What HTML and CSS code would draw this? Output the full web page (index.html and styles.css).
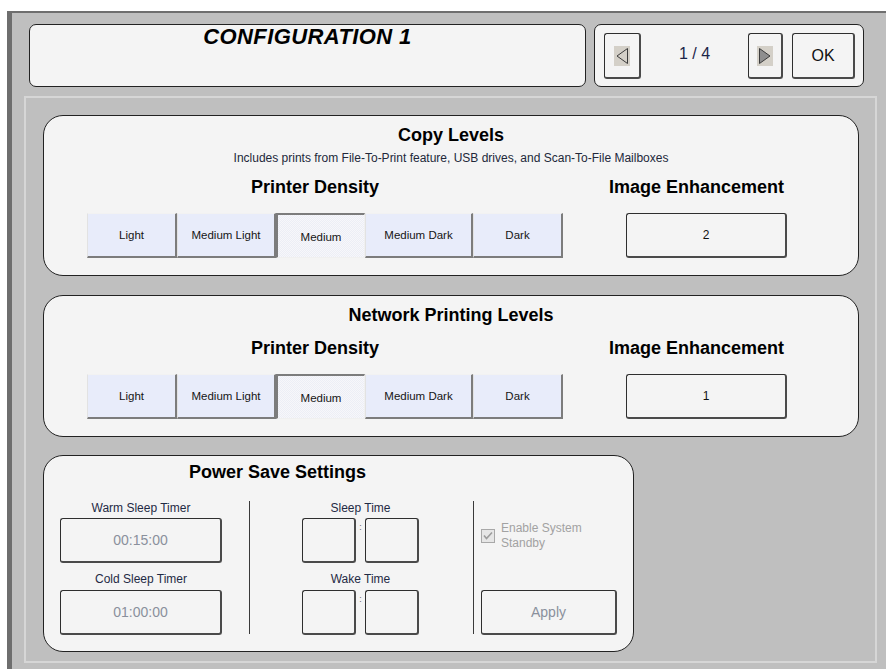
FILE: index.html
```html
<!DOCTYPE html>
<html>
<head>
<meta charset="utf-8">
<link rel="stylesheet" href="styles.css">
</head>
<body>
<div class="frame">
  <div class="header-row">
    <div class="title-box"><h1 class="page-title">CONFIGURATION 1</h1></div>
    <div class="nav-box">
      <button class="btn nav-btn prev">
        <svg width="16" height="20" viewBox="0 0 16 20"><rect x="0" y="0" width="16" height="20" fill="#d4d0c8"/><polygon points="13.5,2.5 3,10 13.5,17.5" fill="#d4d0c8" stroke="#3c3c3c" stroke-width="1"/></svg>
      </button>
      <div class="counter">1 / 4</div>
      <button class="btn nav-btn next">
        <svg width="16" height="20" viewBox="0 0 16 20"><rect x="0" y="0" width="16" height="20" fill="#d4d0c8"/><polygon points="2.5,2.5 13,10 2.5,17.5" fill="#8e8e8e" stroke="#3c3c3c" stroke-width="1"/></svg>
      </button>
      <button class="btn ok-btn">OK</button>
    </div>
  </div>

  <div class="content">
    <section class="panel levels-panel">
      <h2 class="panel-title">Copy Levels</h2>
      <p class="subtitle">Includes prints from File-To-Print feature, USB drives, and Scan-To-File Mailboxes</p>
      <div class="levels">
        <div class="density-col">
          <h3 class="col-title density-title">Printer Density</h3>
          <div class="density-row">
            <div class="dens w-light">Light</div>
            <div class="dens w-ml">Medium Light</div>
            <div class="dens w-med selected">Medium</div>
            <div class="dens w-md">Medium Dark</div>
            <div class="dens w-dark">Dark</div>
          </div>
        </div>
        <div class="enh-col">
          <h3 class="col-title">Image Enhancement</h3>
          <div class="btn enh-btn">2</div>
        </div>
      </div>
    </section>

    <section class="panel levels-panel network">
      <h2 class="panel-title">Network Printing Levels</h2>
      <div class="levels">
        <div class="density-col">
          <h3 class="col-title density-title">Printer Density</h3>
          <div class="density-row">
            <div class="dens w-light">Light</div>
            <div class="dens w-ml">Medium Light</div>
            <div class="dens w-med selected">Medium</div>
            <div class="dens w-md">Medium Dark</div>
            <div class="dens w-dark">Dark</div>
          </div>
        </div>
        <div class="enh-col">
          <h3 class="col-title">Image Enhancement</h3>
          <div class="btn enh-btn">1</div>
        </div>
      </div>
    </section>

    <section class="panel power-panel">
      <h2 class="panel-title power-title">Power Save Settings</h2>
      <div class="ps-body">
        <div class="ps-left">
          <div class="ps-label">Warm Sleep Timer</div>
          <div class="btn timer-btn">00:15:00</div>
          <div class="ps-label second">Cold Sleep Timer</div>
          <div class="btn timer-btn">01:00:00</div>
        </div>
        <div class="divider d1"></div>
        <div class="ps-mid">
          <div class="ps-label">Sleep Time</div>
          <div class="time-row">
            <div class="btn time-box"></div>
            <span class="colon">:</span>
            <div class="btn time-box"></div>
          </div>
          <div class="ps-label second">Wake Time</div>
          <div class="time-row">
            <div class="btn time-box"></div>
            <span class="colon">:</span>
            <div class="btn time-box"></div>
          </div>
        </div>
        <div class="divider d2"></div>
        <div class="ps-right">
          <div class="standby">
            <svg class="cb" width="14" height="14" viewBox="0 0 14 14"><rect x="0.5" y="0.5" width="13" height="13" fill="#e6e6e6" stroke="#a8a8a8"/><path d="M3 6.5 L5.5 9.5 L11 3.5" fill="none" stroke="#9c9c9c" stroke-width="1.6"/></svg>
            <span class="standby-label">Enable System<br>Standby</span>
          </div>
          <div class="btn apply-btn">Apply</div>
        </div>
      </div>
    </section>
  </div>
</div>
</body>
</html>
```

FILE: styles.css
```css
* { box-sizing: border-box; }
html, body { margin: 0; padding: 0; background: #ffffff; }
body {
  font-family: "Liberation Sans", Arial, sans-serif;
  width: 886px;
  height: 671px;
  overflow: hidden;
}
.frame {
  margin: 11px 0 0 7px;
  border-top: 2px solid #6e6e6e;
  border-left: 5px solid #6e6e6e;
  background: #bfbfbf;
  height: 658px;
  padding-top: 11px;
}
.header-row {
  display: flex;
  gap: 8px;
  margin-left: 17px;
}
.title-box {
  width: 557px;
  height: 63px;
  background: #f4f4f4;
  border: 1px solid #222;
  border-radius: 7px;
}
.page-title {
  margin: 0;
  font-size: 22px;
  line-height: 24px;
  font-weight: bold;
  font-style: italic;
  letter-spacing: 0.4px;
  text-align: center;
  color: #000;
}
.nav-box {
  width: 270px;
  height: 63px;
  background: #f4f4f4;
  border: 1px solid #222;
  border-radius: 7px;
  padding: 8px 8px 0 9px;
  display: flex;
  align-items: flex-start;
}
.btn {
  background: #f4f4f4;
  border-style: solid;
  border-color: #2e2e2e #4a4a4a #4a4a4a #2e2e2e;
  border-width: 1px 2px 2px 1px;
  border-radius: 3px;
  font-family: "Liberation Sans", Arial, sans-serif;
  display: flex;
  align-items: center;
  justify-content: center;
  padding: 0;
}
.nav-btn { height: 46px; }
.nav-btn svg { display: block; }
.prev { width: 37px; }
.next { width: 35px; }
.counter {
  flex: 1;
  text-align: center;
  font-size: 16px;
  line-height: 19px;
  padding-top: 11px;
  color: #1b2548;
}
.ok-btn {
  width: 63px;
  height: 46px;
  margin-left: 9px;
  font-size: 16px;
  color: #111;
}
.content {
  margin: 9px 0 0 12px;
  width: 853px;
  height: 567px;
  border: 2px solid #d6d6d6;
  padding: 17px 0 0 17px;
}
.panel {
  background: #f4f4f4;
  border: 1px solid #222;
  border-radius: 20px;
}
.levels-panel {
  width: 816px;
  padding: 9px 0 17px 0;
}
.levels-panel.network { margin-top: 19px; }
.panel-title {
  margin: 0;
  font-size: 18px;
  line-height: 21px;
  font-weight: bold;
  text-align: center;
  color: #000;
}
.subtitle {
  margin: 5px 0 0 0;
  font-size: 12px;
  line-height: 14px;
  text-align: center;
  color: #22283a;
}
.levels {
  display: flex;
  margin-top: 12px;
  padding-left: 43px;
}
.col-title {
  margin: 0;
  font-size: 18px;
  line-height: 21px;
  font-weight: bold;
  text-align: center;
  color: #000;
  white-space: nowrap;
}
.density-col { width: 476px; }
.density-title { padding-right: 20px; }
.density-row {
  display: flex;
  margin-top: 15px;
}
.dens {
  height: 45px;
  background: #e8ecfa;
  border-style: solid;
  border-color: #f2f2f2 #7c7c7c #7c7c7c #e2e2e2;
  border-width: 1px 2px 2px 1px;
  display: flex;
  align-items: center;
  justify-content: center;
  font-size: 11.5px;
  color: #151515;
}
.dens.selected {
  border-color: #7c7c7c #f0f0f0 #f0f0f0 #7c7c7c;
  border-width: 2px 1px 1px 2px;
  background: repeating-conic-gradient(#f7f7fa 0 25%, #eceef6 0 50%) 0 0 / 2px 2px;
  padding-top: 2px;
}
.w-light { width: 90px; }
.w-ml { width: 99px; }
.w-med { width: 89px; }
.w-md { width: 108px; }
.w-dark { width: 90px; }
.enh-col {
  width: 181px;
  margin-left: 43px;
}
.enh-btn {
  width: 161px;
  height: 45px;
  margin: 15px 0 0 20px;
  font-size: 12px;
  color: #111;
}
.power-panel {
  width: 591px;
  margin-top: 18px;
  padding: 6px 16px 16px 16px;
}
.power-title {
  text-align: left;
  margin-left: 129px;
}
.ps-body {
  display: flex;
  margin-top: 18px;
}
.ps-label {
  font-size: 12px;
  line-height: 14px;
  text-align: center;
  color: #1f2a44;
  margin-bottom: 3px;
}
.ps-label.second { margin-top: 9px; margin-bottom: 4px; }
.ps-left { width: 162px; }
.timer-btn {
  height: 45px;
  font-size: 14px;
  color: #8a909c;
}
.divider {
  width: 1px;
  background: #3a3a3a;
  margin-bottom: 1px;
}
.d1 { margin-left: 27px; }
.ps-mid { width: 117px; margin-left: 52px; }
.time-row { display: flex; }
.time-box { width: 54px; height: 45px; }
.colon {
  width: 9px;
  text-align: center;
  font-size: 9px;
  line-height: 9px;
  padding-top: 5px;
  color: #666;
}
.d2 { margin-left: 54px; }
.ps-right {
  width: 136px;
  margin-left: 7px;
  display: flex;
  flex-direction: column;
}
.standby {
  display: flex;
  align-items: center;
  margin-top: 20px;
}
.cb { display: block; flex: none; }
.standby-label {
  margin-left: 6px;
  font-size: 12px;
  line-height: 15px;
  color: #a2a2a2;
}
.apply-btn {
  margin-top: auto;
  height: 45px;
  font-size: 14px;
  color: #8a909c;
}
```
